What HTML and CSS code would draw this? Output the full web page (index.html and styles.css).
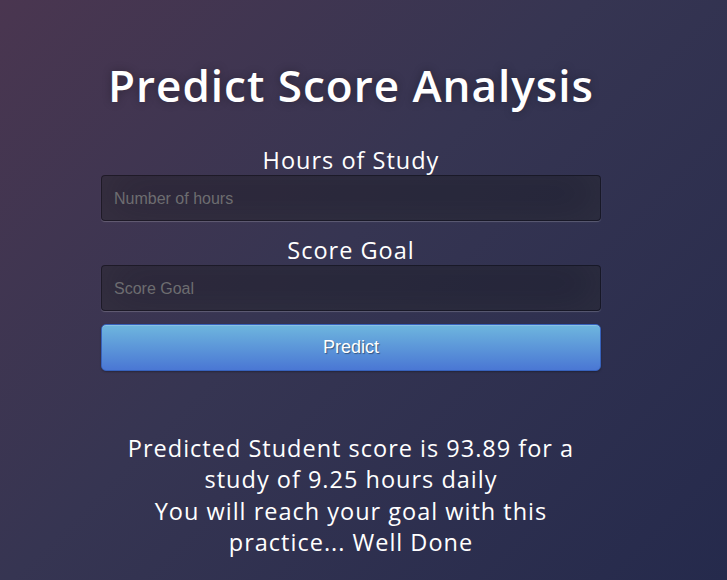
FILE: index.html
```html
<!DOCTYPE html>
<html>
<head>
<meta charset="utf-8">
<link rel="stylesheet" href="styles.css">
</head>
<body>
<div class="page">
  <div class="login">
    <h1 class="title">Predict Score Analysis</h1>
    <form class="form">
      <label class="label" for="hours">Hours of Study</label>
      <input class="field" id="hours" type="text" placeholder="Number of hours">
      <label class="label" for="goal">Score Goal</label>
      <input class="field" id="goal" type="text" placeholder="Score Goal">
      <button class="btn" type="button">Predict</button>
    </form>
    <div class="result">Predicted Student score is 93.89 for a study of 9.25 hours daily<br>You will reach your goal with this practice... Well Done</div>
  </div>
</div>
</body>
</html>
```
FILE: styles.css
```css
html, body {
  margin: 0;
  height: 100%;
}
body {
  background: linear-gradient(135deg, #4a3650 0%, #363552 45%, #252a4c 100%);
  font-family: "Open Sans", sans-serif;
  color: #fff;
  overflow: hidden;
}
.page {
  width: 702px;
}
.login {
  width: 500px;
  margin: 0 auto;
  padding-top: 55px;
}
.title {
  margin: 0 -40px;
  font-size: 44px;
  font-weight: 600;
  line-height: 60px;
  text-align: center;
  letter-spacing: 1px;
  text-shadow: 0 0 10px rgba(0,0,0,0.3);
}
.form {
  display: flex;
  flex-direction: column;
  margin-top: 30px;
}
.label {
  display: block;
  text-align: center;
  font-size: 23.5px;
  letter-spacing: 1px;
  line-height: 30px;
}
.field {
  box-sizing: border-box;
  height: 46px;
  margin: 0 0 14px;
  padding: 1px 12px 0;
  background: rgba(0,0,0,0.3);
  border: 1px solid rgba(0,0,0,0.3);
  border-radius: 4px;
  box-shadow: inset 0 -5px 45px rgba(100,100,100,0.2), 0 1px 1px rgba(255,255,255,0.2);
  color: #fff;
  font-family: "Liberation Sans", Arial, sans-serif;
  font-size: 16px;
  outline: none;
}
.field::placeholder {
  color: #6d6d70;
}
.field + .btn {
  margin-top: -1px;
}
.btn {
  box-sizing: border-box;
  height: 47px;
  background: linear-gradient(to bottom, #6eb6de, #4a77d4);
  border: 1px solid #3762bc;
  border-radius: 5px;
  color: #fff;
  font-family: "Liberation Sans", Arial, sans-serif;
  font-size: 18px;
  text-shadow: 1px 1px 1px rgba(0,0,0,0.4);
  box-shadow: inset 0 1px 0 rgba(255,255,255,0.2), 0 1px 2px rgba(0,0,0,0.3);
}
.result {
  margin-top: 62px;
  text-align: center;
  font-size: 23.5px;
  letter-spacing: 1px;
  line-height: 31.3px;
}
```
